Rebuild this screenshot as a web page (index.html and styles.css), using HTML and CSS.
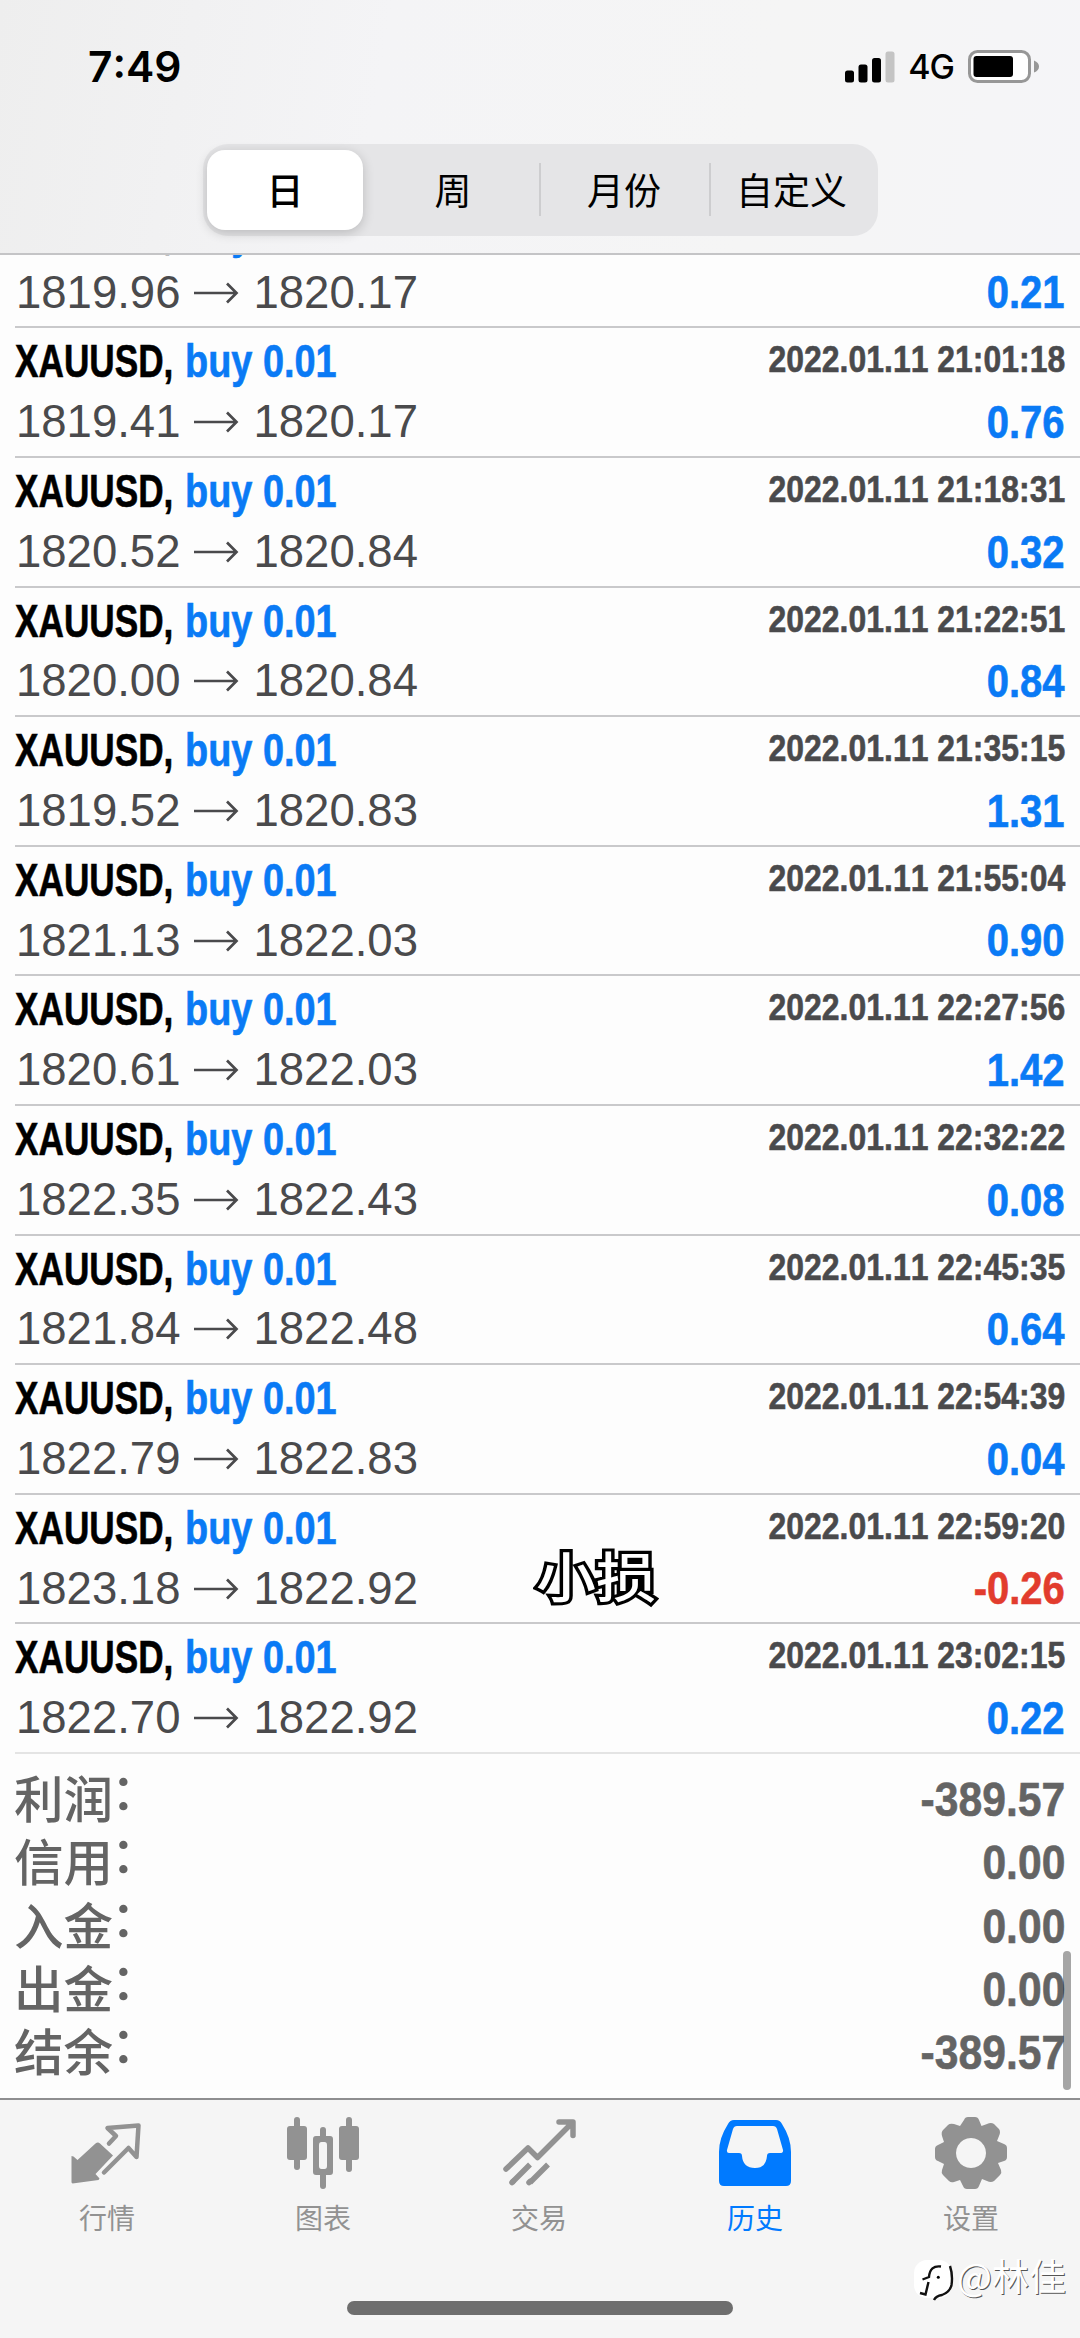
FILE: index.html
```html
<!DOCTYPE html>
<html lang="zh-CN">
<head>
<meta charset="utf-8">
<title>历史</title>
<link rel="stylesheet" href="styles.css">
</head>
<body>
<div class="screen">
  <header class="header">
    <div class="status">
      <span class="time">7:49</span>
      <span class="status-right">
        <svg class="signal" width="50" height="32" viewBox="0 0 50 32"><rect x="0" y="19.500" width="9" height="12" rx="2.500"/><rect x="13.500" y="13.500" width="9" height="18" rx="2.500"/><rect x="27" y="7" width="9" height="24.500" rx="2.500"/><rect x="40.500" y="0.500" width="9" height="31" rx="2.500" fill="#c4c4c4"/></svg>
        <span class="network">4G</span>
        <svg class="battery" width="72" height="34" viewBox="0 0 72 34"><rect x="1.500" y="1.500" width="60" height="30" rx="8" fill="#fff" stroke="#979797" stroke-width="3"/><rect x="5.500" y="6" width="39.500" height="21" rx="3"/><path d="M66 10.500q5 2 5 6t-5 6z" fill="#979797"/></svg>
      </span>
    </div>
    <div class="segments">
      <span class="segment selected">日</span>
      <span class="segment week">周</span>
      <span class="segment month divided">月份</span>
      <span class="segment divided">自定义</span>
    </div>
  </header>
  <main class="list" id="list"></main>
  <section class="summary">
    <div class="total"><span class="label">利润<i class="colon">：</i></span><b class="narrow">-389.57</b></div>
    <div class="total"><span class="label">信用<i class="colon">：</i></span><b class="narrow">0.00</b></div>
    <div class="total"><span class="label">入金<i class="colon">：</i></span><b class="narrow">0.00</b></div>
    <div class="total"><span class="label">出金<i class="colon">：</i></span><b class="narrow">0.00</b></div>
    <div class="total"><span class="label">结余<i class="colon">：</i></span><b class="narrow">-389.57</b></div>
  </section>
  <nav class="tabs">
    <div class="tab">
      <svg width="72" height="72" viewBox="0 -2 72 72"><path d="M29 21.500 42 33.500 24.500 52 28.500 56.500 27.500 58 1.500 61.500 0.500 60.500V34L2.500 34.500 6.500 38 24.500 21.500Q27 19.500 29 21.500z" fill="#929292"/><path d="M38 21.500 45 14 36.500 6 67.500 3.500 65.500 35 57.500 26 33 50.500" fill="none" stroke="#929292" stroke-width="4.500" stroke-linecap="round" stroke-linejoin="round"/></svg>
      <span>行情</span>
    </div>
    <div class="tab">
      <svg width="72" height="72" viewBox="0 -1 72 72"><g fill="#929292"><rect x="0" y="5" width="20" height="34" rx="3"/><rect x="7" y="-4" width="6" height="53" rx="3"/><rect x="52" y="5" width="20" height="34" rx="3"/><rect x="59" y="-4" width="6" height="55" rx="3"/><rect x="33" y="6" width="6" height="14" rx="3"/><rect x="33" y="50" width="6" height="18" rx="3"/><path fill-rule="evenodd" d="M29 15h14q3 0 3 3v33q0 3-3 3H29q-3 0-3-3V18q0-3 3-3zM34.500 21q-2.500 0-2.500 3v21q0 3 2.500 3h3q2.500 0 2.500-3V24q0-3-2.500-3z"/></g></svg>
      <span>图表</span>
    </div>
    <div class="tab">
      <svg width="72" height="72" viewBox="0 -1 72 72"><g fill="none" stroke="#929292" stroke-width="5.500" stroke-linecap="round" stroke-linejoin="round"><path d="M3 48 25 27 34.500 36.500 69 2M56 1H70V14.500" /><path stroke-linecap="butt" d="m27 43.500-18 18M45 43.500l-18 18"/><path d="m9 61.500 1-1M26 61.500l1-1"/></g></svg>
      <span>交易</span>
    </div>
    <div class="tab active">
      <svg width="72" height="72" viewBox="0 0 72 72"><path fill="#007aff" fill-rule="evenodd" d="M15 0H57Q61 0 63 4 72 18 72 32V61Q72 66 67 66H5Q0 66 0 61V32Q0 18 9 4 11 0 15 0zM18 6Q15 6 14 9L8 30Q7.500 33 10 33H20Q23 33 23 36 24 48 36 48 47 48 48 36 48 33 51 33H61Q64.500 33 64 30L58 9Q57 6 54 6z"/></svg>
      <span>历史</span>
    </div>
    <div class="tab">
      <svg width="72" height="72" viewBox="0 0 72 72"><path fill="#929292" fill-rule="evenodd" d="M29 0Q30-3 33-3H40Q43-3 44 0L46.500 6 52 4Q56 2 59 4L64 9Q66 12 64 16L62 21 69 24Q72 25 72 28V37Q72 40 69 41L63 43 66 50Q67 53 65 55L59 61Q56 63 52 61L47 59 44 66Q43 69 40 69H32Q29 69 28 66L25 60 19 62Q16 63 14 61L8 55Q6 53 7 50L9 44 3 41Q0 40 0 37V29Q0 26 3 25L9 22 7 16Q6 12 8 10L13 5Q15 3 19 4L25 6zM36 18a15 15 0 1 0 .01 0z"/></svg>
      <span>设置</span>
    </div>
  </nav>
  <div class="scrollbar"></div>
  <div class="caption">小损</div>
  <div class="watermark"><svg width="38" height="44" viewBox="0 0 38 44"><rect x="-1" y="3" width="38" height="38" rx="13" fill="#fff"/><path d="M26 9.500Q15 8 14 20L7.500 22.500M13.500 25 10.500 37.500 5 36M35 9Q38 18 36.500 28 35 35 27 38 21 39 19 43" fill="none" stroke="#111" stroke-width="2.400"/><circle cx="23.300" cy="20.300" r="1.500"/></svg><span>@林佳</span></div>
  <div class="home-indicator"></div>
</div>
<script src="history.js"></script>
</body>
</html>
```
FILE: styles.css
```css
* { box-sizing: border-box; }
body { margin: 0; }
.screen {
  position: relative;
  width: 1080px;
  height: 2338px;
  overflow: hidden;
  display: flex;
  flex-direction: column;
  background: #fdfdfd;
  font-family: "Liberation Sans", "Noto Sans CJK SC", sans-serif;
  font-kerning: none;
}
.header {
  flex: none;
  height: 255px;
  border-bottom: 2px solid #c4c4c6;
  background: linear-gradient(100deg, #eeeeee 0, #f4f4f6 35%, #f5f5f5 70%, #f5f5f8 100%);
}
.status {
  height: 144px;
  padding: 0 40px 11px 88px;
  display: flex;
  align-items: center;
  justify-content: space-between;
  font-family: Inter, sans-serif;
}
.time { font-size: 42.500px; font-weight: 600; }
.status-right { display: flex; align-items: center; }
.network { margin: 0 14px 0 13px; font-size: 34px; font-weight: 500; letter-spacing: -1px; }
.segments {
  width: 675px;
  height: 92px;
  margin-left: 203px;
  padding: 6px 4px;
  display: flex;
  border-radius: 25px;
  background: #e5e5e7;
}
.segment {
  flex: 1;
  display: flex;
  align-items: center;
  justify-content: center;
  position: relative;
  padding-bottom: 2px;
  font: 37px "Noto Sans CJK SC", sans-serif;
}
.segment.selected {
  flex: none;
  width: 156px;
  border-radius: 18px;
  background: #fff;
  box-shadow: 0 3px 12px #00000030;
  font-weight: 500;
}
.segment.week { flex: none; width: 176px; padding-left: 4px; }
.segment.month { flex: none; width: 170px; }
.segment.divided::before {
  content: "";
  position: absolute;
  left: 0;
  width: 2px;
  height: 53px;
  background: #cdcdcf;
}
.list {
  flex: none;
  height: 1499px;
  display: flex;
  flex-direction: column;
  justify-content: flex-end;
  overflow: hidden;
}
.deal {
  flex: none;
  height: 129.600px;
  margin-left: 15px;
  padding: 3px 15px 0 0;
  border-bottom: 2px solid #c9c9cb;
}
.deal:last-child { border-color: #e4e4e4; }
.line { display: flex; justify-content: space-between; height: 60.500px; line-height: 60px; font-size: 46px; }
.narrow { display: inline-block; transform: scaleX(0.870); transform-origin: right; white-space: nowrap; -webkit-text-stroke: 0.600px currentColor; }
.symbol,
.order { display: inline-block; transform-origin: left; white-space: nowrap; font-weight: 700; -webkit-text-stroke: 0.600px currentColor; }
.symbol { width: 170px; transform: scaleX(0.765); color: #000; }
.order { transform: scaleX(0.824); color: #0a7af5; }
.date { font-size: 37.500px; color: #4a4a4c; line-height: 57px; transform: scaleX(0.852); }
.prices { display: flex; align-items: center; color: #4a4a4c; font-size: 45.500px; padding-left: 1px; }
.arrow { margin: 0 14px 0 13px; }
.profit { color: #0a7af5; }
.profit.loss { color: #e23c2e; }
.summary { flex: none; height: 344px; padding: 14px 15px 0 14px; }
.total { display: flex; justify-content: space-between; height: 63.300px; line-height: 63px; font-size: 49px; color: #646464; }
.label { font: 500 49.500px/57px "Noto Sans CJK SC", sans-serif; white-space: nowrap; }
.colon { display: inline-block; font-style: normal; transform: translate(-2px, -8px); }
.tabs {
  flex: 1;
  display: grid;
  grid-template-columns: repeat(5, 216px);
  border-top: 2px solid #8e8e90;
  background: #f5f5f5;
}
.tab {
  display: flex;
  flex-direction: column;
  align-items: center;
  padding: 20px 2px 0 0;
  color: #929292;
  font: 28px/40px "Noto Sans CJK SC", sans-serif;
}
.tab svg { overflow: visible; margin-bottom: 5px; }
.active { color: #007aff; }
.scrollbar {
  position: absolute;
  left: 1063px;
  top: 1951px;
  width: 8px;
  height: 139px;
  border-radius: 4px;
  background: #00000059;
}
.caption {
  position: absolute;
  left: 536px;
  top: 1535px;
  color: #fff;
  font: 500 60px/80px "Noto Sans CJK SC", sans-serif;
  transform: scaleY(0.900);
  -webkit-text-stroke: 7px #000;
  paint-order: stroke fill;
}
.watermark {
  position: absolute;
  left: 915px;
  top: 2257px;
  display: flex;
  gap: 4px;
  color: #fff;
  font: 37px/36px "Noto Sans CJK SC", sans-serif;
  text-shadow: 1px 1px 0 #555;
}
.watermark svg { overflow: visible; }
.home-indicator {
  position: absolute;
  left: 347px;
  top: 2301px;
  width: 386px;
  height: 14px;
  border-radius: 7px;
  background: #6e6e6e;
}
```
FILE: history.js
```js
const deals = [
  ["", "1819.96", "1820.17", "0.21"],
  ["21:01:18", "1819.41", "1820.17", "0.76"],
  ["21:18:31", "1820.52", "1820.84", "0.32"],
  ["21:22:51", "1820.00", "1820.84", "0.84"],
  ["21:35:15", "1819.52", "1820.83", "1.31"],
  ["21:55:04", "1821.13", "1822.03", "0.90"],
  ["22:27:56", "1820.61", "1822.03", "1.42"],
  ["22:32:22", "1822.35", "1822.43", "0.08"],
  ["22:45:35", "1821.84", "1822.48", "0.64"],
  ["22:54:39", "1822.79", "1822.83", "0.04"],
  ["22:59:20", "1823.18", "1822.92", "-0.26"],
  ["23:02:15", "1822.70", "1822.92", "0.22"],
];

const arrow = '<svg class="arrow" width="46" height="22" viewBox="0 0 46 22"><path d="M1 11H43M34 1.500 43.500 11 34 20.500" fill="none" stroke="#4a4a4c" stroke-width="2.700"/></svg>';

document.getElementById("list").innerHTML = deals.map(([time, open, close, profit]) => `
  <article class="deal">
    <div class="line">
      <span><span class="symbol">XAUUSD,</span><span class="order">buy 0.01</span></span>
      <b class="narrow date">${time && "2022.01.11 " + time}</b>
    </div>
    <div class="line">
      <span class="prices">${open}${arrow}${close}</span>
      <b class="profit narrow${profit.startsWith("-") ? " loss" : ""}">${profit}</b>
    </div>
  </article>`).join("");
```
